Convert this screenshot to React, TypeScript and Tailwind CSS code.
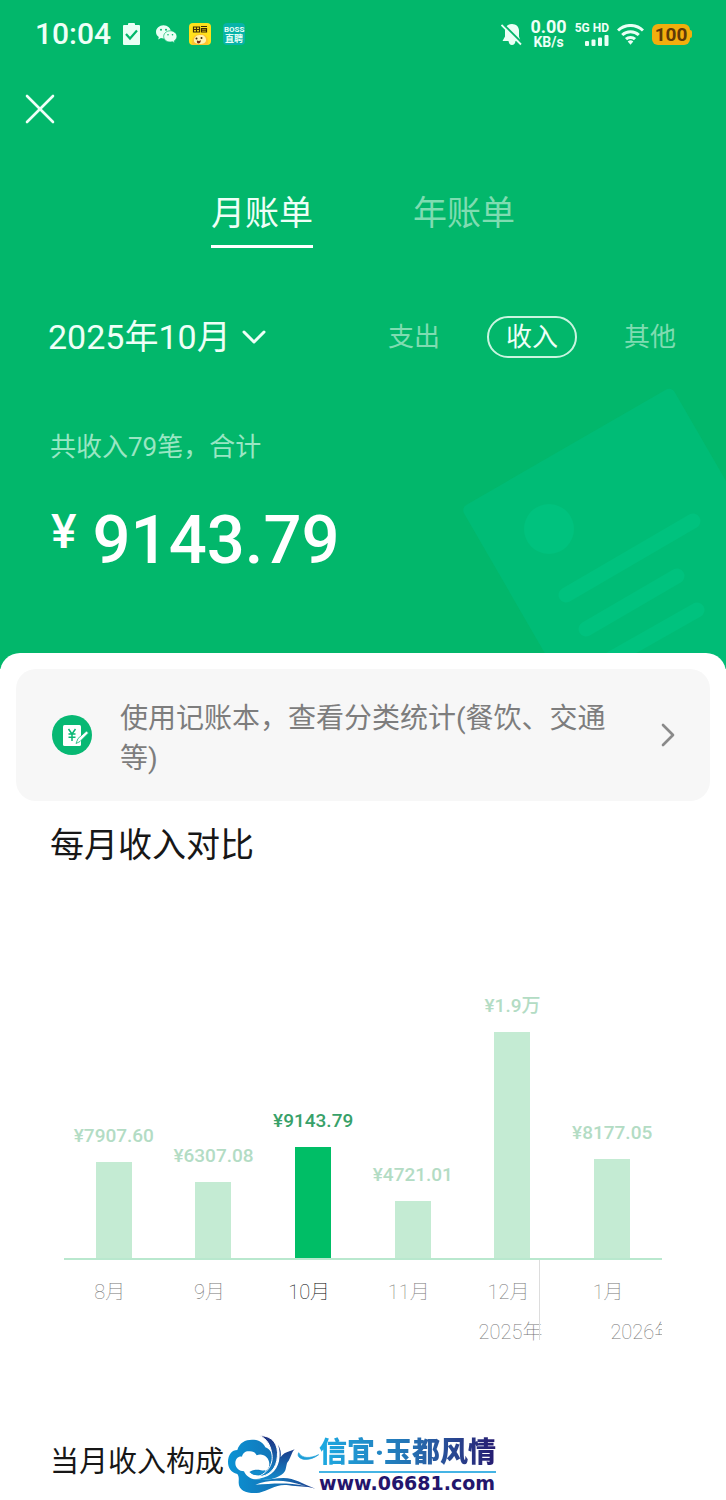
import { useState } from "react";
import { ChevronDown, ChevronRight, X } from "lucide-react";
import clsx from "clsx";

const tabs = ["月账单", "年账单"];
const filters = ["支出", "收入", "其他"];

const months = [
  { month: "8月", amount: "¥7907.60", height: 96 },
  { month: "9月", amount: "¥6307.08", height: 76 },
  { month: "10月", amount: "¥9143.79", height: 111 },
  { month: "11月", amount: "¥4721.01", height: 57 },
  { month: "12月", amount: "¥1.9万", height: 226 },
  { month: "1月", amount: "¥8177.05", height: 99 },
];

const StatusBar = () => (
  <div className="flex h-[68px] items-center justify-between pl-[35px] pr-[34px]">
    <div className="flex items-center">
      <span className="mr-3 text-[30px] font-medium leading-8">10:04</span>
      {/* Clipboard */}
      <svg className="mr-4 h-[22px] w-[17px]" viewBox="0 0 17 22">
        <path d="M1 2h4V1q0-1 1-1h5q1 0 1 1v1h4q1 0 1 1v18q0 1-1 1H1q-1 0-1-1V3q0-1 1-1z" fill="#e9fff5" />
        <path d="M3 11l4 4.500 7-8" fill="none" stroke="#02b76b" strokeWidth="2.200" />
      </svg>
      {/* WeChat */}
      <svg className="mr-3 h-[18px] w-[21px]" viewBox="0 0 21 18">
        <path d="M7.500 0.200C3.400 0.200 0 3.200 0 6.900c0 2.100 1.100 3.900 2.800 5.100L2.200 14.500l2.700-1.400c.9.200 1.700.4 2.600.4 4.100 0 7.500-3 7.500-6.600S11.600.2 7.500.2z" fill="#e9fff5" />
        <path d="M14.200 5.800c-3.700 0-6.500 2.500-6.500 5.600s2.900 5.600 6.500 5.600c.8 0 1.600-.1 2.300-.3l2.300 1.200-.6-2c1.600-1 2.700-2.700 2.700-4.500 0-3.100-3-5.600-6.700-5.600z" fill="#e9fff5" stroke="#02b76b" strokeWidth=".7" />
        <g fill="#02b76b">
          <circle cx="5" cy="4.800" r="1" />
          <circle cx="10" cy="4.800" r="1" />
          <circle cx="12" cy="9.800" r=".8" />
          <circle cx="16.500" cy="9.800" r=".8" />
        </g>
      </svg>
      {/* Yellow app badge */}
      <svg className="mr-3 size-[22px]" viewBox="0 0 22 22">
        <rect width="22" height="22" rx="4" fill="#ffe11b" />
        <path d="M3 22c-1-8 3-11 9-11s8 5 7 11z" fill="#ffc42e" />
        <path d="M5 18c0-5 3-6 7-6 3 0 5 2 5 5 0 3-3 4-6 4s-6-1-6-3z" fill="#fff3b0" />
        <path d="M4.500 4h6v5h-6zM4.500 6.500h6M7.500 4v5M12 3.500h6M12.500 5.500h5v3.500h-5zM12 7.200h6" fill="none" stroke="#3a2b05" strokeWidth="1.200" />
        <circle cx="7.500" cy="15.500" r="1" fill="#3a2005" />
        <circle cx="12.500" cy="15" r="1" fill="#3a2005" />
        <path d="M8 17.500q2.500 1 4-.5-.5 3.500-2.500 3.500T8 17.500z" fill="#7a2a12" />
      </svg>
      <span className="flex size-[22px] flex-col items-center justify-center rounded-sm bg-[#08b3a8] font-bold text-[#e9fff5]">
        <span className="text-[8px] leading-[9px]">BOSS</span>
        <span className="text-[9px] leading-[10px]">直聘</span>
      </span>
    </div>

    <div className="flex items-center">
      {/* Muted bell */}
      <svg className="mr-2 h-[23px] w-[21px]" viewBox="0 0 21 23">
        <path d="M11 1C7 1 4 3.800 4 7.500V13.500L1.500 18h6q.5 4 3.500 4t3.500-4h5L18 13.500V7.500C18 3.800 15 1 11 1z" fill="#e9fff5" />
        <path d="M1.500 .5l20 20" stroke="#02b76b" strokeWidth="2" />
        <path d="M.5 2l19.500 19.500" stroke="#e9fff5" strokeWidth="1.800" />
      </svg>
      <span className="mr-2 flex flex-col items-center font-bold">
        <span className="text-[18px] leading-4">0.00</span>
        <span className="text-[14px] leading-[14px]">KB/s</span>
      </span>
      <span className="mr-2 flex flex-col items-end gap-px">
        <span className="text-[12px] font-bold leading-3">5G HD</span>
        <svg className="h-[11px] w-[24px]" viewBox="0 0 24 11" fill="#e9fff5">
          <rect x="0" y="6" width="4" height="5" rx="1" />
          <rect x="6.500" y="4.500" width="4" height="6.500" rx="1" />
          <rect x="13" y="2.500" width="4" height="8.500" rx="1" />
          <rect x="19.500" y="0" width="4" height="11" rx="1" />
        </svg>
      </span>
      <svg className="mr-2 h-[21px] w-[27px]" viewBox="0 0 27 21" fill="none" stroke="#e9fff5" strokeWidth="3">
        <path d="M1 6.500a18 18 0 0 1 25 0" />
        <path d="M5.200 11a12 12 0 0 1 16.600 0" />
        <path d="M9 15.200a6.500 6.500 0 0 1 9 0" />
        <path d="M10.700 17.500a4 4 0 0 1 5.600 0l-2.800 3.300z" fill="#e9fff5" stroke="none" />
      </svg>
      <span className="h-[21px] w-[38px] rounded-md bg-[#f2ae0d] text-center text-[19px] font-bold leading-[21px] text-[#5f3a08]">
        100
      </span>
      <span className="h-2 w-[2px] rounded-r bg-[#f2ae0d]" />
    </div>
  </div>
);

const BillDecoration = () => (
  <svg className="absolute bottom-0 right-0 h-[289px] w-[266px]" viewBox="460 380 266 289">
    <rect width="243" height="340" rx="6" transform="translate(461 508) rotate(-30)" fill="#00bc76" />
    <circle cx="549" cy="529" r="25" fill="#00c27e" />
    <g stroke="#00c27e" strokeWidth="15" strokeLinecap="round">
      <path d="M566 595L693 521" />
      <path d="M586 629L677 576" />
      <path d="M600 665L697 610" />
    </g>
  </svg>
);

const Hero = () => {
  const [tab, setTab] = useState("月账单");
  const [filter, setFilter] = useState("收入");

  return (
    <header className="relative bg-[#02b76b] pb-[89px] text-[#eefff7]">
      <BillDecoration />
      <div className="relative">
        <StatusBar />
        <div className="flex h-[82px] items-center px-[14px]">
          <button aria-label="关闭">
            <X className="size-[52px]" strokeWidth={1.200} />
          </button>
        </div>

        {/* Tabs */}
        <nav className="flex justify-center gap-[100px] pt-[38px]">
          {tabs.map((name) => (
            <button
              key={name}
              onClick={() => setTab(name)}
              className={clsx(
                "border-b-3 pb-[7px] text-[34px] leading-[50px]",
                tab === name ? "border-white" : "border-transparent text-[#7fdcb1]"
              )}
            >
              {name}
            </button>
          ))}
        </nav>

        {/* Month picker and type filter */}
        <div className="flex items-center justify-between pl-12 pr-[31px] pt-[68px]">
          <button className="flex items-center gap-[3px] text-[34px] leading-[42px]">
            2025年10月
            <ChevronDown className="size-10" strokeWidth={1.800} />
          </button>
          <div className="flex gap-7">
            {filters.map((name) => (
              <button
                key={name}
                onClick={() => setFilter(name)}
                className={clsx(
                  "h-[42px] w-[90px] rounded-full border-2 text-[26px] leading-[36px]",
                  filter === name ? "border-[#c9f5e0]" : "border-transparent text-[#7fdcb1]"
                )}
              >
                {name}
              </button>
            ))}
          </div>
        </div>

        <p className="pl-[50px] pt-[69px] text-[26px] leading-10 text-[#99e6c3]">共收入79笔，合计</p>
        <p className="flex items-start gap-4 pl-[51px] pt-[33px] font-medium text-white">
          <span className="text-5xl leading-16">¥</span>
          <span className="text-[67px] leading-20">9143.79</span>
        </p>
      </div>
    </header>
  );
};

const LedgerBanner = () => (
  <a href="#ledger" className="mx-4 flex items-center rounded-[20px] bg-[#f7f7f7] py-[22px] pl-9 pr-[22px]">
    <svg className="size-10 shrink-0" viewBox="0 0 40 40">
      <circle cx="20" cy="20" r="20" fill="#07b873" />
      <rect x="11" y="10" width="18" height="21" rx="1.500" fill="#fff" />
      <path d="M16.500 14l3.500 5 3.500-5M20 19v7M16.500 19h7M16.500 22.300h7" fill="none" stroke="#07b873" strokeWidth="1.500" />
      <path d="M24 28.500l2-5 8.500-7.500 2 2-8.500 8.500z" fill="#fff" stroke="#07b873" strokeWidth=".8" />
    </svg>
    <span className="ml-7 mr-10 flex-1 pt-2 text-[28px] leading-10 text-[#7d7d7d]">
      使用记账本，查看分类统计(餐饮、交通等)
    </span>
    <ChevronRight className="size-10 shrink-0 text-[#8a8a8a]" strokeWidth={1.600} />
  </a>
);

const MonthlyChart = () => {
  const [selected, setSelected] = useState("10月");

  return (
    <div className="mx-16">
      <div className="mt-[122px] grid grid-cols-6 items-end border-b-2 border-[#b9e8ce]">
        {months.map(({ month, amount, height }) => (
          <button key={month} onClick={() => setSelected(month)} className="flex flex-col items-center gap-3">
            <span
              className={clsx(
                "whitespace-nowrap text-[19px] font-medium leading-7",
                month === selected ? "text-[#38a169]" : "text-[#b3dcc4]"
              )}
            >
              {amount}
            </span>
            <span
              className={clsx("w-9", month === selected ? "bg-[#00be66]" : "bg-[#c4ebd3]")}
              style={{ height }}
            />
          </button>
        ))}
      </div>
      <div className="relative pt-[18px] text-xl font-thin leading-7 text-[#777]">
        <div className="grid grid-cols-6">
          {months.map(({ month }) => (
            <span key={month} className={clsx("pr-2 text-center", month === selected && "text-black")}>
              {month}
            </span>
          ))}
        </div>
        {/* Year boundary */}
        <div className="absolute left-[79%] top-0 h-20 w-1 border-r border-[#ddd]" />
        <div className="mt-3 flex overflow-hidden whitespace-nowrap">
          <span className="w-4/5 shrink-0 text-right">2025年</span>
          <span className="ml-[68px]">2026年</span>
        </div>
      </div>
    </div>
  );
};

const SiteLogo = () => (
  <a href="#site" className="flex items-center">
    <svg className="h-[60px] w-[91px]" viewBox="18 10 273 180">
      <defs>
        <linearGradient id="cloud" x1="0" y1="0" x2="1" y2="0">
          <stop offset="0" stopColor="#0b93d4" />
          <stop offset=".6" stopColor="#1470b4" />
          <stop offset="1" stopColor="#1d3c8c" />
        </linearGradient>
        <linearGradient id="wing" x1="0" y1="0" x2="0" y2="1">
          <stop offset="0" stopColor="#1d2f80" />
          <stop offset="1" stopColor="#128ccc" />
        </linearGradient>
      </defs>
      {/* Cloud body and trailing wave */}
      <path
        d="M46 130C26 126 18 110 18 94C18 72 30 58 46 58C52 36 70 27 90 27C110 27 124 36 130 50C148 56 156 76 150 104L140 128L96 142C118 154 150 142 184 142C220 142 240 160 280 174C250 166 226 168 200 164C164 158 140 180 112 186C80 190 50 182 50 156C50 146 52 138 46 130z"
        fill="url(#cloud)"
      />
      <path
        d="M66 122C52 122 40 112 40 98C40 84 50 76 60 78C62 66 72 60 84 62C94 62 100 66 104 74C122 66 142 80 142 100C142 112 136 118 128 122C110 114 92 116 82 124C96 138 128 138 146 122C140 138 120 148 96 146C80 142 70 132 66 122z"
        fill="#fff"
      />
      <path d="M100 162C140 146 190 146 250 166C190 154 150 160 100 162z" fill="#fff" />
      {/* Wings */}
      <path d="M113 15C152 14 170 42 166 78C164 112 142 138 108 138C146 122 156 90 148 62C144 42 134 24 113 15z" fill="url(#wing)" stroke="#fff" strokeWidth="3" />
      <path d="M168 42C176 56 178 66 176 80C184 66 198 64 218 56C208 66 208 78 200 90C190 98 196 116 184 128C166 144 132 152 96 146C140 144 164 122 171 92C174 74 174 58 168 42z" fill="url(#wing)" />
      <path d="M86 126C98 118 116 124 130 118C122 134 98 138 86 126z" fill="#128ccc" />
      <path d="M230 66C220 84 256 98 290 72C264 84 240 84 230 66z" fill="#1d9ed8" stroke="#1d9ed8" strokeWidth="2" />
    </svg>
    <span className="flex flex-col">
      <span className="border-b-2 border-[#45b4e4] bg-linear-to-r from-[#1cabe2] via-[#2374b5] to-[#251a70] bg-clip-text text-[28px] font-black leading-9 text-transparent">
        信宜·玉都风情
      </span>
      <span className="font-['DejaVu_Sans',sans-serif] text-[19px] font-bold leading-5 text-[#24156c]">
        www.06681.com
      </span>
    </span>
  </a>
);

export default function App() {
  return (
    <div lang="zh-CN" className="min-h-screen bg-white font-['Roboto','Noto_Sans_CJK_SC',sans-serif]">
      <Hero />
      <main className="relative -mt-4 rounded-t-[20px] bg-white pt-4">
        <LedgerBanner />
        <h2 className="pl-[50px] pt-[19px] text-[34px] leading-[50px] text-[#171717]">每月收入对比</h2>
        <MonthlyChart />
        <div className="flex items-center gap-1 pl-[50px] pt-[88px]">
          <h2 className="pb-1 text-[29px] leading-10 text-[#171717]">当月收入构成</h2>
          <SiteLogo />
        </div>
      </main>
    </div>
  );
}
